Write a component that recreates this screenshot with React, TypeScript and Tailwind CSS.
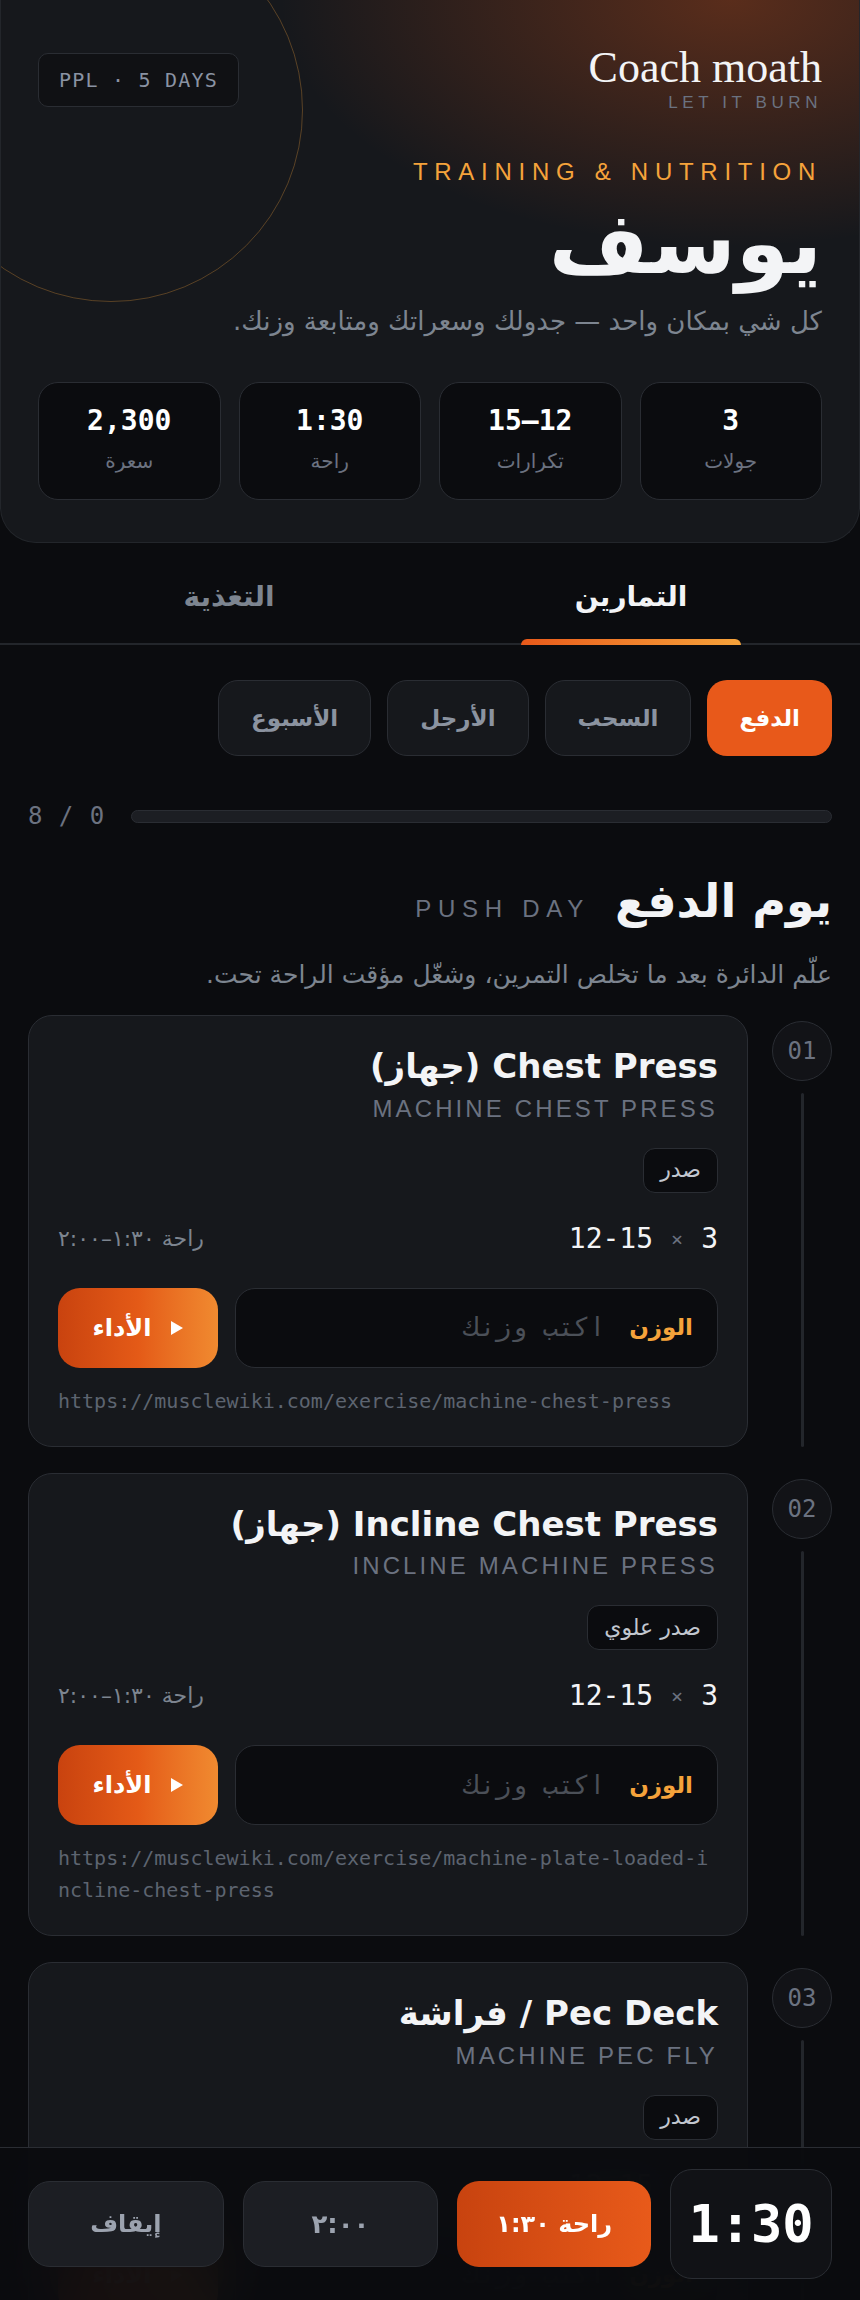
import { useState } from "react";

type Exercise = {
  title: string;
  en: string;
  muscle: string;
  sets: number;
  reps: string;
  rest: string;
  url: string;
};

const stats = [
  { value: "3", label: "جولات" },
  { value: "12–15", label: "تكرارات" },
  { value: "1:30", label: "راحة" },
  { value: "2,300", label: "سعرة" },
];

const days = [
  { id: "push", label: "الدفع" },
  { id: "pull", label: "السحب" },
  { id: "legs", label: "الأرجل" },
  { id: "week", label: "الأسبوع" },
];

const pushDay: Exercise[] = [
  {
    title: "Chest Press (جهاز)",
    en: "Machine Chest Press",
    muscle: "صدر",
    sets: 3,
    reps: "12-15",
    rest: "راحة ١:٣٠–٢:٠٠",
    url: "https://musclewiki.com/exercise/machine-chest-press",
  },
  {
    title: "Incline Chest Press (جهاز)",
    en: "Incline Machine Press",
    muscle: "صدر علوي",
    sets: 3,
    reps: "12-15",
    rest: "راحة ١:٣٠–٢:٠٠",
    url: "https://musclewiki.com/exercise/machine-plate-loaded-incline-chest-press",
  },
  {
    title: "Pec Deck / فراشة",
    en: "Machine Pec Fly",
    muscle: "صدر",
    sets: 3,
    reps: "12-15",
    rest: "راحة ١:٣٠–٢:٠٠",
    url: "https://musclewiki.com/exercise/machine-pec-fly",
  },
  {
    title: "Shoulder Press (جهاز)",
    en: "Machine Shoulder Press",
    muscle: "أكتاف",
    sets: 3,
    reps: "10-12",
    rest: "راحة ١:٣٠–٢:٠٠",
    url: "https://musclewiki.com/exercise/machine-overhead-press",
  },
  {
    title: "Lateral Raise",
    en: "Dumbbell Lateral Raise",
    muscle: "أكتاف جانبي",
    sets: 3,
    reps: "12-15",
    rest: "راحة ١:٠٠–١:٣٠",
    url: "https://musclewiki.com/exercise/dumbbell-lateral-raise",
  },
  {
    title: "Triceps Pushdown",
    en: "Cable Rope Pushdown",
    muscle: "ترايسبس",
    sets: 3,
    reps: "12-15",
    rest: "راحة ١:٠٠–١:٣٠",
    url: "https://musclewiki.com/exercise/cable-rope-pushdown",
  },
  {
    title: "Overhead Extension",
    en: "Cable Overhead Tricep Extension",
    muscle: "ترايسبس",
    sets: 3,
    reps: "12-15",
    rest: "راحة ١:٠٠–١:٣٠",
    url: "https://musclewiki.com/exercise/cable-overhead-tricep-extension",
  },
  {
    title: "Cable Crossover",
    en: "Cable Chest Fly",
    muscle: "صدر",
    sets: 3,
    reps: "12-15",
    rest: "راحة ١:٠٠–١:٣٠",
    url: "https://musclewiki.com/exercise/cable-pec-fly",
  },
];

export default function App() {
  const [tab, setTab] = useState<"train" | "food">("train");
  const [day, setDay] = useState("push");

  return (
    <div
      dir="rtl"
      className="min-h-screen bg-[#0b0c0f] pb-[200px] font-['DejaVu_Sans',sans-serif] text-[#f3f4f6]"
    >
      <Header />

      <nav className="border-b-2 border-[#23262b]">
        <div className="grid grid-cols-2 px-[28px]">
          <TabButton active={tab === "train"} onClick={() => setTab("train")}>
            التمارين
          </TabButton>
          <TabButton active={tab === "food"} onClick={() => setTab("food")}>
            التغذية
          </TabButton>
        </div>
      </nav>

      <main className="px-[28px] pt-[35px]">
        <div className="flex gap-4">
          {days.map((d) =>
            d.id === day ? (
              <button
                key={d.id}
                className="flex h-[76px] items-center rounded-[20px] bg-[#e8591a] px-8 text-[23px] font-bold text-white"
              >
                {d.label}
              </button>
            ) : (
              <button
                key={d.id}
                onClick={() => setDay(d.id)}
                className="flex h-[76px] items-center rounded-[20px] border border-[#2a2d33] bg-[#16181c] px-8 text-[23px] font-bold text-[#8b93a0]"
              >
                {d.label}
              </button>
            ),
          )}
        </div>

        <div className="mt-[42px] flex items-center gap-[26px]">
          <div className="h-[13px] flex-1 rounded-full border border-[#2a2d33] bg-[#1c1e23]" />
          <span className="font-['DejaVu_Sans_Mono',monospace] text-[24px] leading-[1.5] tracking-[0.04em] text-[#6b7280]">
            0 / 8
          </span>
        </div>

        <div className="mt-[39px] flex items-baseline gap-[25px]">
          <h2 className="text-[46px] font-bold leading-[1.25] text-[#f3f4f6]">
            يوم الدفع
          </h2>
          <span className="font-['Liberation_Sans',sans-serif] text-[24px] tracking-[0.28em] text-[#6b7280]">
            PUSH DAY
          </span>
        </div>
        <p className="mt-[25px] text-[25px] leading-[1.5] text-[#7d8590]">
          علّم الدائرة بعد ما تخلص التمرين، وشغّل مؤقت الراحة تحت.
        </p>

        <ol className="mt-[22px] flex flex-col gap-[26px]">
          {pushDay.map((ex, i) => (
            <ExerciseRow key={ex.url} index={i + 1} ex={ex} />
          ))}
        </ol>
      </main>

      <RestBar />
    </div>
  );
}

function Header() {
  return (
    <header className="relative overflow-hidden rounded-b-[36px] border border-t-0 border-[#23262b] bg-[#16181c] bg-[radial-gradient(ellipse_75%_65%_at_85%_0%,rgba(232,89,26,0.32),transparent_70%)] px-[37px] pb-[42px]">
      <div className="pointer-events-none absolute -left-[82px] -top-[82px] size-[384px] rounded-full border border-[#f5a33b]/30" />

      <div className="relative flex items-start justify-between pt-[46px]">
        <div>
          <div className="font-['Liberation_Serif',serif] text-[44px] leading-none text-[#f3f4f6]">
            Coach moath
          </div>
          <div className="mt-[4px] font-['Liberation_Sans',sans-serif] text-[17px] leading-none tracking-[0.27em] text-[#6b7280]">
            LET IT BURN
          </div>
        </div>
        <div
          dir="ltr"
          className="mt-[7px] rounded-[10px] border border-[#2a2d33] bg-[#101114] px-5 py-[14px] font-['DejaVu_Sans_Mono',monospace] text-[20px] leading-[24px] tracking-[0.06em] text-[#8a93a3]"
        >
          PPL · 5 DAYS
        </div>
      </div>

      <div className="relative mt-[49px] font-['Liberation_Sans',sans-serif] text-[24px] leading-none tracking-[0.28em] text-[#f5a33b]">
        TRAINING &amp; NUTRITION
      </div>
      <h1 className="relative mt-[16px] text-[86px] font-bold leading-none text-[#f3f4f6]">
        يوسف
      </h1>
      <p className="relative mt-[16px] text-[26px] leading-[1.5] text-[#7d8590]">
        كل شي بمكان واحد — جدولك وسعراتك ومتابعة وزنك.
      </p>

      <div className="relative mt-[41px] grid grid-cols-4 gap-[18px]">
        {stats.map((s) => (
          <div
            key={s.label}
            className="flex flex-col items-center rounded-[20px] border border-[#2a2d33] bg-[#0b0c0f] pb-[23px] pt-6"
          >
            <span className="font-['DejaVu_Sans_Mono',monospace] text-[28px] font-bold leading-none text-white">
              {s.value}
            </span>
            <span className="mt-[11px] text-[20px] leading-[1.5] text-[#6b7280]">
              {s.label}
            </span>
          </div>
        ))}
      </div>
    </header>
  );
}

function TabButton({
  active,
  onClick,
  children,
}: {
  active: boolean;
  onClick: () => void;
  children: React.ReactNode;
}) {
  return (
    <button
      onClick={onClick}
      className={
        active
          ? "relative pb-[25px] pt-[33px] text-[28px] font-bold leading-[1.5] text-[#f3f4f6]"
          : "relative pb-[25px] pt-[33px] text-[28px] font-bold leading-[1.5] text-[#7d8590]"
      }
    >
      {children}
      {active && (
        <span className="absolute bottom-[-2px] left-1/2 h-[6px] w-[220px] -translate-x-1/2 rounded-t-full bg-linear-to-r from-[#e8591a] to-[#f6a33b]" />
      )}
    </button>
  );
}

function ExerciseRow({ index, ex }: { index: number; ex: Exercise }) {
  return (
    <li className="flex gap-6">
      <div className="flex w-[60px] shrink-0 flex-col items-center pt-[6px]">
        <span className="flex size-[60px] items-center justify-center rounded-full border border-[#2a2d33] bg-[#121317] font-['DejaVu_Sans_Mono',monospace] text-[24px] text-[#6b7280]">
          {String(index).padStart(2, "0")}
        </span>
        <span className="mt-3 w-[3px] flex-1 rounded-full bg-[#23262b]" />
      </div>

      <article className="min-w-0 flex-1 rounded-[24px] border border-[#2a2d33] bg-[#16181c] p-[29px]">
        <h3 className="text-[34px] font-bold leading-[1.25] text-[#f3f4f6]">
          {ex.title}
        </h3>
        <div className="mt-[9px] font-['Liberation_Sans',sans-serif] text-[24px] uppercase leading-none tracking-[0.13em] text-[#6b7280]">
          {ex.en}
        </div>
        <div className="mt-[27px] flex">
          <span className="flex h-[45px] items-center rounded-[12px] border border-[#2a2d33] bg-[#0b0c0f] px-4 text-[22px] leading-none text-[#c2c7cf]">
            {ex.muscle}
          </span>
        </div>

        <div className="mt-[32px] flex h-[28px] items-center justify-between">
          <div className="flex items-center gap-[18px] font-['DejaVu_Sans_Mono',monospace] text-[28px] leading-none text-[#f3f4f6]">
            <span>{ex.sets}</span>
            <span className="text-[20px] text-[#6b7280]">×</span>
            <span>{ex.reps}</span>
          </div>
          <span className="text-[22px] leading-none text-[#7d8590]">{ex.rest}</span>
        </div>

        <div className="mt-[35px] flex gap-[17px]">
          <label className="flex h-[80px] flex-1 items-center gap-6 rounded-[20px] border border-[#2a2d33] bg-[#0b0c0f] px-6">
            <span className="shrink-0 text-[23px] font-bold text-[#f5a33b]">
              الوزن
            </span>
            <input
              placeholder="اكتب وزنك"
              className="min-w-0 flex-1 bg-transparent font-['DejaVu_Sans_Mono',monospace] text-[26px] tracking-[0.12em] text-white outline-none placeholder:text-[#4b5058]"
            />
          </label>
          <button className="flex h-[80px] w-[160px] shrink-0 items-center justify-center gap-5 rounded-[22px] bg-linear-to-r from-[#c9430f] via-[#e45a17] to-[#f08a30] text-[24px] font-bold text-white">
            <svg width="12" height="14" viewBox="0 0 12 14" className="fill-white">
              <polygon points="0,0 12,7 0,14" />
            </svg>
            الأداء
          </button>
        </div>

        <div
          dir="ltr"
          className="mt-[17px] break-all font-['DejaVu_Sans_Mono',monospace] text-[20px] leading-[32px] text-[#5d6470]"
        >
          {ex.url}
        </div>
      </article>
    </li>
  );
}

function RestBar() {
  return (
    <div className="fixed inset-x-0 bottom-0 flex items-center gap-[19px] border-t border-[#2a2d33] bg-[#0b0c0f]/95 px-[28px] py-[21px] backdrop-blur-xl">
      <div className="flex h-[110px] w-[162px] shrink-0 items-center justify-center rounded-[22px] border border-[#2a2d33] bg-[#111216] font-['DejaVu_Sans_Mono',monospace] text-[52px] font-bold text-white">
        1:30
      </div>
      <button className="flex h-[86px] flex-1 items-center justify-center rounded-[22px] bg-linear-to-r from-[#c8430f] to-[#e85a1a] text-[24px] font-bold text-white">
        راحة ١:٣٠
      </button>
      <button className="flex h-[86px] flex-1 items-center justify-center rounded-[22px] border border-[#2a2d33] bg-[#1c1e23] text-[26px] font-bold tracking-[0.15em] text-[#9ca3af]">
        ٢:٠٠
      </button>
      <button className="flex h-[86px] flex-1 items-center justify-center rounded-[22px] border border-[#2a2d33] bg-[#1c1e23] text-[24px] font-bold text-[#9ca3af]">
        إيقاف
      </button>
    </div>
  );
}
